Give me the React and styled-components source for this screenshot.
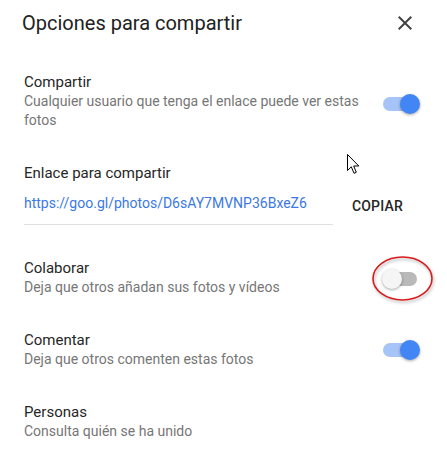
import React from "react";
import styled, { createGlobalStyle } from "styled-components";

const Global = createGlobalStyle`
  html, body { margin: 0; padding: 0; background: #ffffff; }
  body { font-family: Roboto, "Noto Sans", Arial, sans-serif; -webkit-font-smoothing: antialiased; }
  * { box-sizing: border-box; }
`;

const Dialog = styled.div`
  width: 447px;
  height: 456px;
  overflow: hidden;
  background: #fff;
  position: relative;
`;

const Header = styled.div`
  display: flex;
  align-items: center;
  justify-content: space-between;
  padding: 9px 30px 19px 22px;
`;

const Title = styled.h1`
  margin: 0;
  font-size: 20px;
  line-height: 28px;
  font-weight: 400;
  color: #212121;
`;

const CloseButton = styled.button`
  width: 24px;
  height: 24px;
  padding: 0;
  border: 0;
  background: none;
  display: flex;
  align-items: center;
  justify-content: center;
  color: #424242;
  cursor: pointer;
`;

const Row = styled.div`
  position: relative;
  display: flex;
  align-items: center;
  justify-content: space-between;
  padding: 17px ${(p) => (p.$wide ? "27px" : "36px")} 17px 24px;
`;

const TextBlock = styled.div`
  display: flex;
  flex-direction: column;
  flex: 1;
  min-width: 0;
  max-width: ${(p) => p.$max || "none"};
`;

const RowTitle = styled.div`
  font-size: 15px;
  line-height: 19px;
  color: #262626;
`;

const RowDesc = styled.div`
  font-size: 14px;
  line-height: 19px;
  color: #767676;
`;

const LinkLine = styled.div`
  display: flex;
  align-items: flex-end;
`;

const LinkField = styled.div`
  flex: 1;
  padding: 11px 0;
  border-bottom: 1px solid #e0e0e0;
  font-size: 14px;
  line-height: 19px;
  color: #3b78e7;
  white-space: nowrap;
`;

const CopyButton = styled.button`
  margin-left: 11px;
  padding: 10px 8px 9px;
  border: 0;
  background: none;
  font-family: inherit;
  font-size: 14px;
  line-height: 19px;
  font-weight: 500;
  letter-spacing: 0.2px;
  color: #262626;
  cursor: pointer;
`;

const SwitchWrap = styled.div`
  position: relative;
  width: 37px;
  height: 20px;
  flex: none;
  margin-top: ${(p) => p.$offset || "0px"};
  display: flex;
  align-items: center;
`;

const Track = styled.div`
  width: 34px;
  height: 14px;
  border-radius: 7px;
  background: ${(p) => (p.$on ? "#a6c4f7" : "#b9b9b9")};
`;

const Knob = styled.div`
  position: absolute;
  top: 0;
  left: ${(p) => (p.$on ? "17px" : "-1px")};
  width: 20px;
  height: 20px;
  border-radius: 50%;
  background: ${(p) => (p.$on ? "#4285f4" : "#f5f5f5")};
  box-shadow: 0 1px 3px rgba(0, 0, 0, 0.35);
`;

const Annotation = styled.svg`
  position: absolute;
  left: -12px;
  top: -16px;
  width: 64px;
  height: 52px;
  overflow: visible;
  pointer-events: none;
  filter: drop-shadow(1px 2px 1.5px rgba(0, 0, 0, 0.3));
`;

const Cursor = styled.svg`
  position: absolute;
  left: 347px;
  top: 7px;
  width: 13px;
  height: 21px;
  pointer-events: none;
`;

function Switch({ on, offset, marked }) {
  return (
    <SwitchWrap $offset={offset}>
      <Track $on={on} />
      <Knob $on={on} />
      {marked && (
        <Annotation viewBox="0 0 64 52">
          <ellipse cx="31.5" cy="25.5" rx="29.5" ry="21.5" fill="none" stroke="#d81c1c" strokeWidth="1.6" />
        </Annotation>
      )}
    </SwitchWrap>
  );
}

export default function App() {
  return (
    <>
      <Global />
      <Dialog>
        <Header>
          <Title>Opciones para compartir</Title>
          <CloseButton aria-label="Cerrar">
            <svg width="24" height="24" viewBox="0 0 24 24">
              <path
                fill="currentColor"
                d="M19 6.41L17.59 5 12 10.59 6.41 5 5 6.41 10.59 12 5 17.59 6.41 19 12 13.41 17.59 19 19 17.59 13.41 12z"
              />
            </svg>
          </CloseButton>
        </Header>

        <Row $wide>
          <TextBlock $max="340px">
            <RowTitle>Compartir</RowTitle>
            <RowDesc>Cualquier usuario que tenga el enlace puede ver estas fotos</RowDesc>
          </TextBlock>
          <Switch on offset="4px" />
        </Row>

        <Row>
          <TextBlock>
            <RowTitle>Enlace para compartir</RowTitle>
            <LinkLine>
              <LinkField>https://goo.gl/photos/D6sAY7MVNP36BxeZ6</LinkField>
              <CopyButton>COPIAR</CopyButton>
            </LinkLine>
          </TextBlock>
          <Cursor viewBox="0 0 13 21">
            <path
              d="M0.5 0.5 L0.5 16.5 L4.3 12.8 L7 19.3 L9.3 18.3 L6.7 12 L11.8 12 Z"
              fill="#ffffff"
              stroke="#000000"
              strokeWidth="1"
              strokeLinejoin="miter"
            />
          </Cursor>
        </Row>

        <Row $wide>
          <TextBlock>
            <RowTitle>Colaborar</RowTitle>
            <RowDesc>Deja que otros añadan sus fotos y vídeos</RowDesc>
          </TextBlock>
          <Switch offset="2px" marked />
        </Row>

        <Row $wide>
          <TextBlock>
            <RowTitle>Comentar</RowTitle>
            <RowDesc>Deja que otros comenten estas fotos</RowDesc>
          </TextBlock>
          <Switch on />
        </Row>

        <Row $wide>
          <TextBlock>
            <RowTitle>Personas</RowTitle>
            <RowDesc>Consulta quién se ha unido</RowDesc>
          </TextBlock>
        </Row>
      </Dialog>
    </>
  );
}
